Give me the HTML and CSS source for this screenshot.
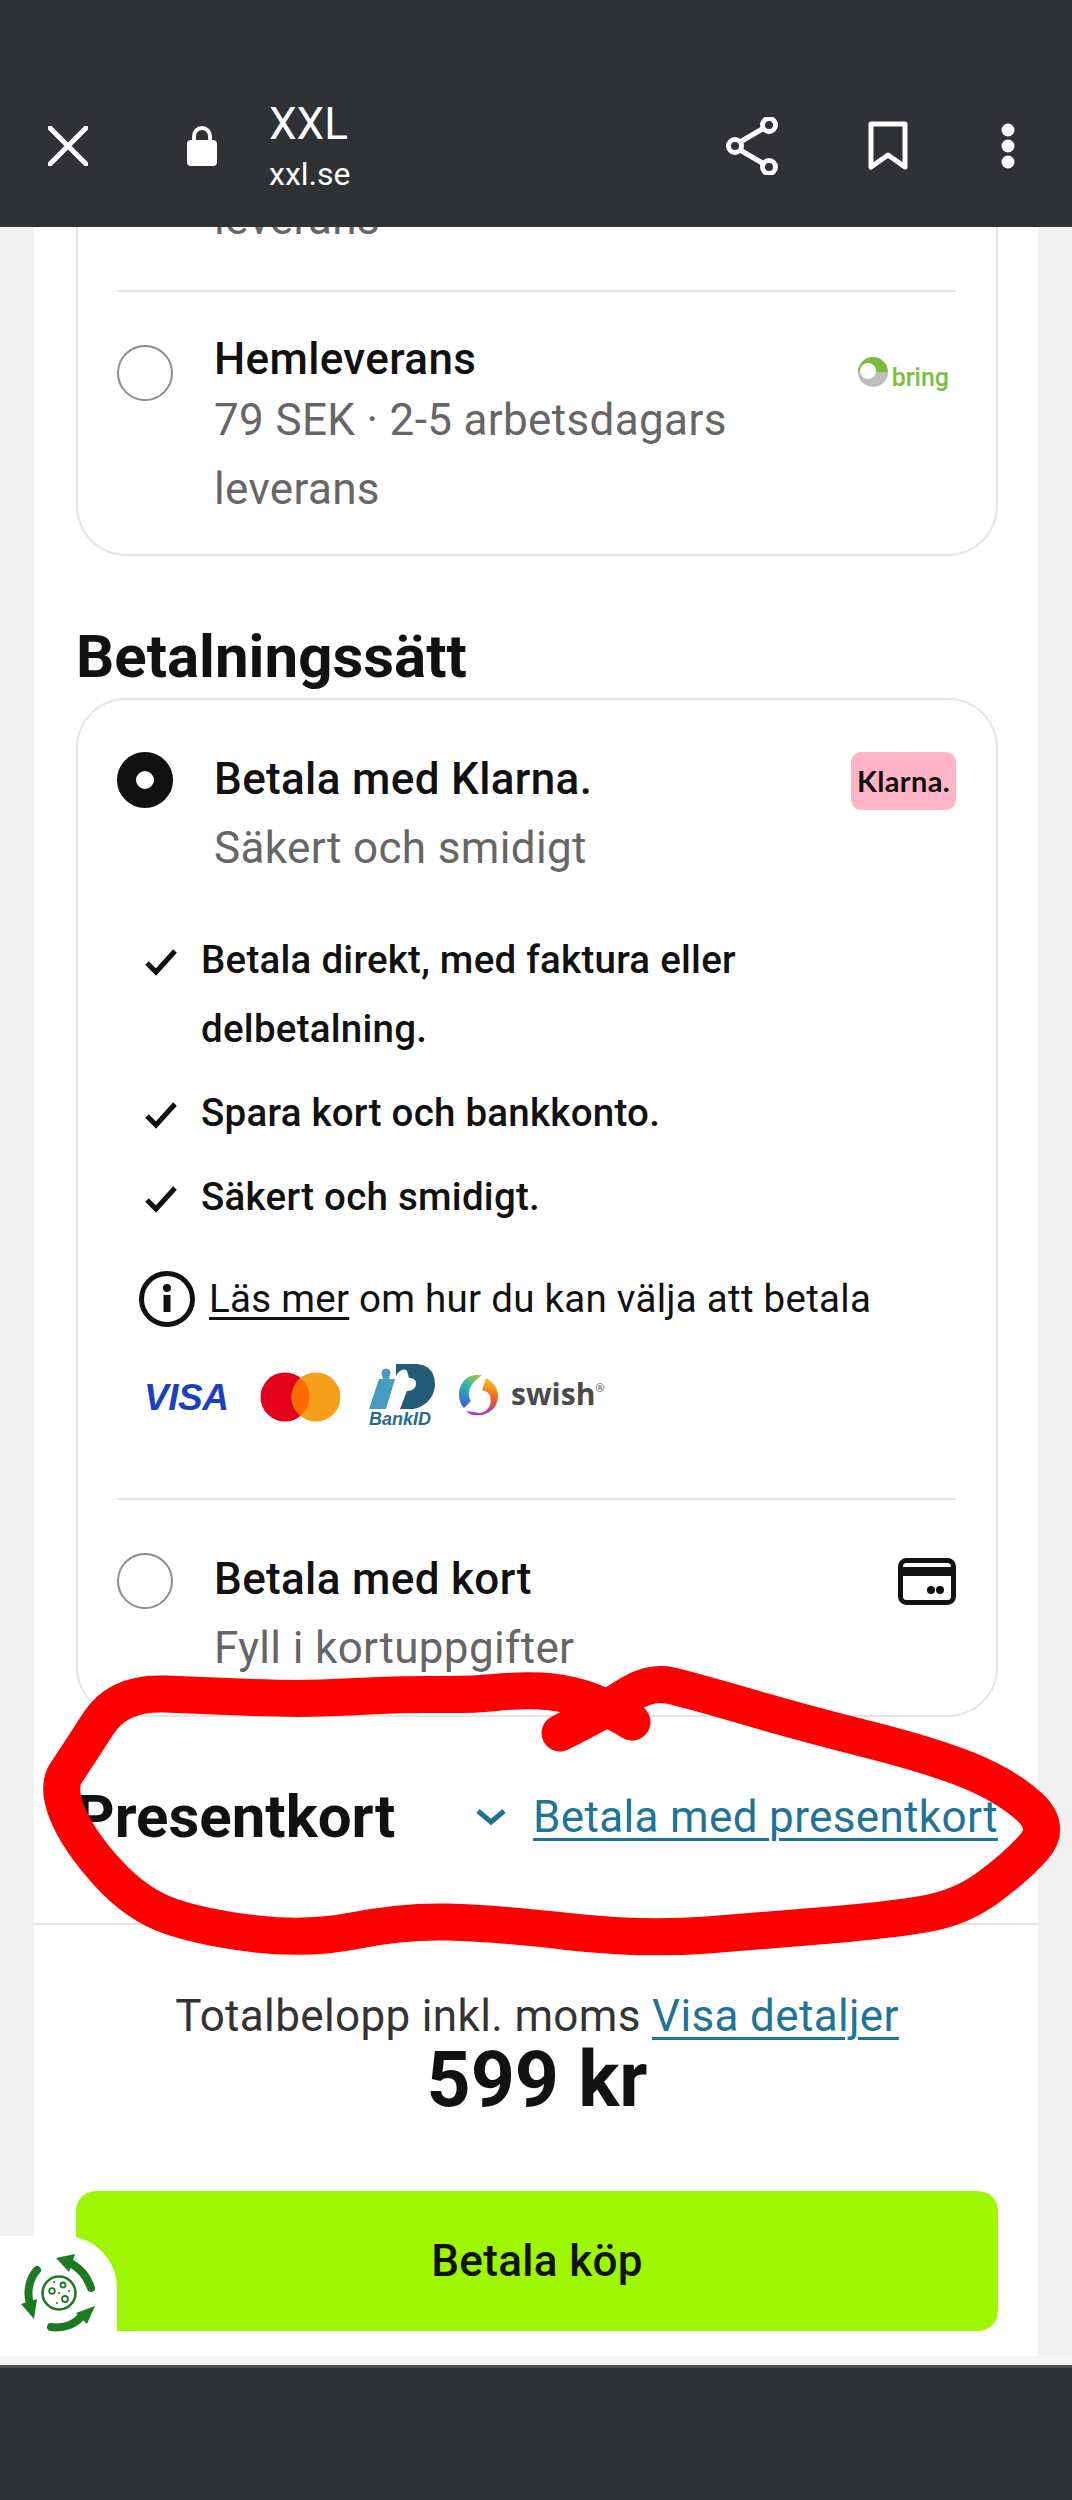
FILE: index.html
```html
<!DOCTYPE html>
<html lang="sv">
<head>
  <meta charset="UTF-8">
  <meta name="viewport" content="width=device-width, initial-scale=1">
  <title>XXL - Kassa</title>
  <link rel="stylesheet" href="styles.css">
</head>
<body>
  <header class="topbar">
    <svg class="ic-close" width="40" height="40" viewBox="0 0 40 40"><path d="M2 2 38 38M38 2 2 38" stroke="#fff" stroke-width="5" stroke-linecap="round"/></svg>
    <svg class="ic-lock" width="30" height="40" viewBox="0 0 30 40"><path d="M7 16V10a8 8 0 0 1 16 0v6" fill="none" stroke="#fff" stroke-width="4"/><rect y="14" width="30" height="26" rx="4" fill="#fff"/></svg>
    <div class="site">
      <div class="site-name">XXL</div>
      <div class="site-url">xxl.se</div>
    </div>
    <div class="top-actions">
      <svg width="52" height="58" viewBox="0 0 52 58"><g fill="none" stroke="#fff" stroke-width="5"><path d="M14 25 38 11M14 33 38 47"/><circle cx="9" cy="29" r="6.5"/><circle cx="43" cy="8" r="6.5"/><circle cx="43" cy="50" r="6.5"/></g></svg>
      <svg class="ic-mark" width="40" height="50" viewBox="0 0 40 50"><path d="M3 3H37V46L20 34 3 46Z" fill="none" stroke="#fff" stroke-width="5" stroke-linejoin="round"/></svg>
      <svg class="ic-dots" width="14" height="46" viewBox="0 0 14 46"><circle cx="7" cy="7" r="6.5" fill="#fff"/><circle cx="7" cy="23" r="6.5" fill="#fff"/><circle cx="7" cy="39" r="6.5" fill="#fff"/></svg>
    </div>
  </header>

  <main class="viewport">
    <div class="page">
      <section class="card card-delivery">
        <div class="cut-line">leverans</div>
        <div class="option option-delivery">
          <span class="radio"></span>
          <div class="option-text">
            <div class="option-title">Hemleverans</div>
            <div class="option-sub">79 SEK · 2-5 arbetsdagars leverans</div>
          </div>
          <div class="bring">
            <svg width="30" height="30" viewBox="0 0 30 30"><path d="M0 15a15 15 0 0 1 30 0Z" fill="#7cbb3c"/><path d="M0 15a15 15 0 0 0 30 0Z" fill="#bdbdbd"/><circle cx="10" cy="14" r="8" fill="#fff"/></svg>
            <span>bring</span>
          </div>
        </div>
      </section>

      <h2 class="section-title">Betalningssätt</h2>
      <section class="card card-pay">
        <div class="option option-klarna">
          <span class="radio radio-on"></span>
          <div class="option-text">
            <div class="option-title">Betala med Klarna.</div>
            <div class="option-sub">Säkert och smidigt</div>
          </div>
          <div class="klarna">Klarna.</div>
        </div>

        <ul class="perks">
          <li><svg width="32" height="28" viewBox="0 0 32 28"><path d="M2 15 11 24 30 3" fill="none" stroke="#111" stroke-width="5"/></svg><span>Betala direkt, med faktura eller delbetalning.</span></li>
          <li><svg width="32" height="28" viewBox="0 0 32 28"><path d="M2 15 11 24 30 3" fill="none" stroke="#111" stroke-width="5"/></svg><span>Spara kort och bankkonto.</span></li>
          <li><svg width="32" height="28" viewBox="0 0 32 28"><path d="M2 15 11 24 30 3" fill="none" stroke="#111" stroke-width="5"/></svg><span>Säkert och smidigt.</span></li>
        </ul>

        <div class="info">
          <svg width="56" height="56" viewBox="0 0 56 56"><circle cx="28" cy="28" r="25.5" fill="none" stroke="#111" stroke-width="5"/><circle cx="28" cy="17" r="4" fill="#111"/><rect x="24.500" y="24" width="7" height="17" fill="#111"/></svg>
          <span><a href="#" class="read-more">Läs mer</a> om hur du kan välja att betala</span>
        </div>

        <div class="pay-logos">
          <span class="visa">VISA</span>
          <svg class="mc" width="80" height="50" viewBox="0 0 80 50"><circle cx="25" cy="25" r="24.500" fill="#e2001a"/><circle cx="56" cy="25" r="24.500" fill="#f79e1b"/><path d="M40.500 6a24.500 24.500 0 0 1 0 38 24.500 24.500 0 0 1 0-38Z" fill="#ff6a00"/></svg>
          <div class="bankid">
            <svg width="66" height="46" viewBox="0 0 66 46"><path d="M10 15h4l-1-4a4.500 4.500 0 1 1 8 0l-1 4h6L17 45H0Z" fill="#479cc0"/><path d="M27 0H46C60 0 66 9 66 20 66 35 53 45 42 45H31L38 27C45 27 47 23 47 19 47 15 43 14 40 14L38 7C35 4 30 6 27 12Z" fill="#235c78"/></svg>
            <span>BankID</span>
          </div>
          <svg class="swish-ring" width="44" height="46" viewBox="0 0 44 46">
            <defs>
              <linearGradient id="swl" x1="0.700" y1="0" x2="0.300" y2="1"><stop offset="0" stop-color="#9acb3c"/><stop offset="0.400" stop-color="#2fb6a8"/><stop offset="1" stop-color="#3a5fe0"/></linearGradient>
              <linearGradient id="swr" x1="0.500" y1="0" x2="0.300" y2="1"><stop offset="0" stop-color="#f5c21c"/><stop offset="0.500" stop-color="#ee5a2a"/><stop offset="1" stop-color="#a03be0"/></linearGradient>
            </defs>
            <path d="M26 3C12 1 3 10 3 23 3 28 5 33 8 36L15 29C10 22 13 12 26 3Z" fill="url(#swl)"/>
            <path d="M30 6C37 10 42 16 42 24 42 36 32 45 18 43 15 43 12 41 10 39L24 41C32 40 37 31 34 24 33 20 29 19 26 18Z" fill="url(#swr)"/>
          </svg>
          <span class="swish">swish<sup>®</sup></span>
        </div>

        <div class="option option-card">
          <span class="radio"></span>
          <div class="option-text">
            <div class="option-title">Betala med kort</div>
            <div class="option-sub">Fyll i kortuppgifter</div>
          </div>
          <svg class="ic-card" width="58" height="47" viewBox="0 0 58 47"><rect x="2.500" y="2.500" width="53" height="42" rx="6" fill="none" stroke="#111" stroke-width="5"/><rect x="3" y="9" width="52" height="9" fill="#111"/><circle cx="33" cy="32" r="4" fill="#111"/><circle cx="42" cy="32" r="4" fill="#111"/></svg>
        </div>
      </section>

      <div class="gift-row">
        <h2 class="section-title gift-title">Presentkort</h2>
        <div class="gift-link">
          <svg width="32" height="18" viewBox="0 0 32 18"><path d="M3 3 16 14 29 3" fill="none" stroke="#1f7396" stroke-width="5"/></svg>
          <a href="#" class="link">Betala med presentkort</a>
        </div>
      </div>

      <div class="summary">
        <div class="total-line">Totalbelopp inkl. moms <a href="#" class="link">Visa detaljer</a></div>
        <div class="total-sum">599 kr</div>
        <button class="pay-btn">Betala köp</button>
      </div>
    </div>

    <div class="eco-badge">
      <svg width="117" height="118" viewBox="0 0 117 118">
        <g fill="none" stroke="#1c7a22" stroke-width="8" stroke-linecap="round">
          <path d="M91 52C87 40 79 31 68 26"/>
          <path d="M37 34C28 44 27 58 30 68"/>
          <path d="M51 91C64 93 75 88 82 80"/>
        </g>
        <g fill="#1c7a22">
          <path d="M56 22 75 18 69 36Z"/>
          <path d="M21 68 37 63 34 83Z"/>
          <path d="M95 70 76 77 87 88Z"/>
        </g>
        <g fill="none" stroke="#1c7a22">
          <circle cx="59" cy="57" r="16.500" stroke-width="2.500"/>
          <circle cx="52" cy="55" r="2.800" stroke-width="1.800"/>
          <circle cx="63" cy="49" r="2.500" stroke-width="1.800"/>
          <circle cx="65" cy="63" r="3" stroke-width="1.800"/>
        </g>
        <g fill="#1c7a22">
          <circle cx="54" cy="46" r="1"/><circle cx="69" cy="55" r="1"/><circle cx="59" cy="57" r="1"/><circle cx="57" cy="67" r="1"/>
        </g>
      </svg>
    </div>
  </main>

  <footer class="navbar"></footer>

  <!-- markering ritad ovanpa skarmbilden -->
  <svg class="scribble" width="1072" height="2500" viewBox="0 0 1072 2500">
    <path d="M632 1722Q600 1703 580 1697.500Q560 1692 540 1691Q520 1690 495 1692.500Q470 1695 440 1694.500Q410 1694 380 1695.500Q350 1697 322 1698Q294 1699 252 1697.500Q210 1696 165 1694Q118 1692 98 1724Q78 1755 68 1770Q56 1785 67 1812.500Q78 1840 107.500 1872.500Q137 1905 171 1916.500Q205 1928 256.500 1934Q308 1940 355.500 1930.500Q403 1921 447.500 1922Q492 1923 567.500 1931.500Q643 1940 707.500 1935Q772 1930 830.500 1925Q889 1920 924.500 1914Q960 1908 987.500 1888Q1015 1868 1033.500 1847.500Q1052 1827 1028.500 1806Q1005 1785 967.500 1770Q930 1755 866.500 1739Q803 1723 746.500 1706.500Q690 1690 670 1685.500Q650 1681 626 1696.500Q602 1712 560 1733" fill="none" stroke="#fe0000" stroke-width="37" stroke-linecap="round" stroke-linejoin="round"/>
  </svg>
</body>
</html>
```

FILE: styles.css
```css
* {
  box-sizing: border-box;
}
body {
  font-family: Roboto, "Liberation Sans", sans-serif;
  letter-spacing: 0.35px;
  margin: 0;
  width: 1072px;
  height: 2500px;
  display: flex;
  flex-direction: column;
  background: #303135;
  color: #111;
  position: relative;
  overflow: hidden;
}
a {
  color: inherit;
}

/* webbläsarens toppfält */
.topbar {
  height: 227px;
  flex: none;
  background: #303135;
  display: flex;
  align-items: center;
  padding: 64px 57px 0 48px;
  color: #fff;
  font-family: Roboto, sans-serif;
  letter-spacing: 0;
  position: relative;
  z-index: 2;
}
.ic-close {
  margin-right: 99px;
}
.ic-lock {
  margin-right: 52px;
}
.site {
  padding-top: 5px;
}
.site-name {
  font-size: 44px;
  line-height: 52px;
}
.site-url {
  font-size: 32px;
  line-height: 48px;
}
.top-actions {
  margin-left: auto;
  display: flex;
  align-items: center;
}
.ic-mark {
  margin-left: 90px;
}
.ic-dots {
  margin-left: 93px;
}

.viewport {
  flex: none;
  height: 2129px;
  background: #f0f0f0;
  overflow: hidden;
  position: relative;
}
.page {
  width: 1004px;
  margin: -42px 0 0 34px;
  height: 2171px;
  background: #fff;
}

.card {
  margin: 0 40px 0 42px;
  border: 2px solid #e2e6e8;
  border-radius: 50px;
  background: #fff;
  padding: 0 40px 0 39px;
}
.card-delivery {
  border-top: none;
  border-radius: 0 0 50px 50px;
  height: 371px;
}
.cut-line {
  font-size: 44px;
  line-height: 69px;
  color: #666;
  padding-left: 97px;
  padding-bottom: 36px;
  border-bottom: 2px solid #e2e6e8;
}

.option {
  display: flex;
  align-items: flex-start;
}
.radio {
  flex: none;
  width: 56px;
  height: 56px;
  border-radius: 50%;
  border: 2px solid #8d8d8d;
  margin-right: 41px;
  background: #fff;
}
.radio-on {
  border: 19px solid #111;
}
.option-text {
  flex: 1;
  max-width: 580px;
}
.option-title {
  font-size: 44px;
  line-height: 69px;
  font-weight: 500;
  color: #111;
}
.option-sub {
  font-size: 44px;
  line-height: 69px;
  color: #666;
}
.option-delivery {
  padding-top: 41px;
  align-items: flex-start;
}
.option-delivery .radio {
  margin-top: 12px;
}
.option-delivery .option-title {
  line-height: 53px;
}
.bring {
  margin: 18px 7px 0 auto;
  display: flex;
  align-items: center;
  gap: 4px;
  font-weight: 500;
  font-size: 25px;
  letter-spacing: 0;
  color: #79c043;
}
.bring span {
  padding-top: 12px;
}

.section-title {
  margin: 0;
  font-size: 60px;
  line-height: 70px;
  font-weight: 700;
  letter-spacing: 0;
  color: #111;
}
.page > .section-title {
  margin: 66px 42px 6px;
}

.card-pay {
  height: 1019px;
}
.option-klarna {
  padding-top: 45px;
}
.option-klarna .radio {
  margin-top: 7px;
}
.option-card .radio {
  margin-top: 8px;
}
.klarna {
  margin: 7px 0 0 auto;
  width: 105px;
  height: 58px;
  border-radius: 10px;
  background: #ffb3c7;
  font-family: Lato, sans-serif;
  font-size: 29px;
  font-weight: 700;
  line-height: 58px;
  text-align: center;
}

.perks {
  list-style: none;
  margin: 42px 0 0;
  padding: 0 0 0 28px;
  font-size: 38.5px;
  line-height: 69px;
  font-weight: 500;
  letter-spacing: 0.25px;
}
.perks li {
  display: flex;
  margin-bottom: 15px;
}
.perks svg {
  flex: none;
  margin: 23px 24px 0 0;
}
.perks span {
  max-width: 560px;
}

.info {
  margin-top: 33px;
  padding-left: 22px;
  display: flex;
  align-items: center;
  gap: 14px;
  font-size: 38.5px;
  line-height: 69px;
  letter-spacing: 0.27px;
}
.read-more {
  text-underline-offset: 5px;
  text-decoration-thickness: 3px;
}

.pay-logos {
  margin-top: 31px;
  padding-left: 27px;
  height: 136px;
  display: flex;
  align-items: flex-start;
  letter-spacing: 0;
  border-bottom: 2px solid #e2e6e8;
}
.visa {
  font-family: "Liberation Sans", sans-serif;
  font-style: italic;
  font-weight: 700;
  font-size: 37px;
  line-height: 40px;
  margin-top: 14px;
  color: #1a3fc4;
  width: 116px;
  letter-spacing: -0.5px;
}
.mc {
  margin-top: 8px;
  margin-right: 29px;
}
.bankid {
  width: 87px;
  display: flex;
  flex-direction: column;
  color: #2a6a8a;
  font-family: "Liberation Sans", sans-serif;
  font-style: italic;
  font-weight: 700;
  font-size: 18px;
  line-height: 18px;
}
.swish-ring {
  margin: 8px 11px 0 0;
}
.swish {
  font-family: "Open Sans", sans-serif;
  font-size: 30px;
  line-height: 40px;
  font-weight: 700;
  color: #4a4a4a;
  margin-top: 10px;
}
.swish sup {
  font-size: 11px;
  font-weight: 400;
  vertical-align: 13px;
  line-height: 0;
}

.option-card {
  padding-top: 45px;
}
.ic-card {
  margin: 13px 0 0 auto;
}

.gift-row {
  margin: 0 40px 0 42px;
  height: 206px;
  padding-bottom: 6px;
  display: flex;
  align-items: center;
  justify-content: space-between;
}
.gift-link {
  display: flex;
  align-items: center;
  gap: 26px;
  font-size: 44px;
}
.link {
  color: #1f7396;
  text-underline-offset: 6px;
  text-decoration-thickness: 3px;
}

.summary {
  border-top: 2px solid #e2e6e8;
  padding: 0 40px 0 42px;
  text-align: center;
}
.total-line {
  margin-top: 61px;
  font-size: 44px;
  line-height: 60px;
  color: #333;
}
.total-sum {
  font-size: 77px;
  line-height: 68px;
  font-weight: 700;
  letter-spacing: 0;
  color: #111;
}
.pay-btn {
  display: block;
  width: 100%;
  height: 140px;
  margin-top: 77px;
  border: none;
  border-radius: 20px;
  background: #9ef700;
  font-family: inherit;
  font-size: 44px;
  font-weight: 500;
  letter-spacing: 0.35px;
  color: #111;
}

.eco-badge {
  position: absolute;
  left: 0;
  bottom: 0;
  width: 117px;
  height: 120px;
  background: #fff;
  border-top-right-radius: 52px;
}

.navbar {
  flex: 1;
  background: #303135;
  border-top: 9px solid #f5f5f5;
  box-shadow: inset 0 3px 0 #4a4c50;
}

.scribble {
  position: absolute;
  left: 0;
  top: 0;
  z-index: 3;
}
```
